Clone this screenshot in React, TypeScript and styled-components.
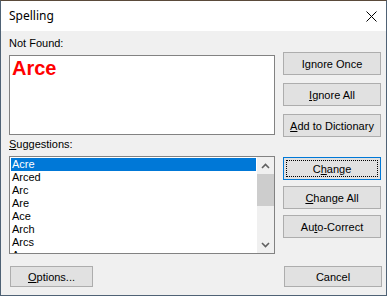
import React from "react";
import styled, { createGlobalStyle } from "styled-components";

const Global = createGlobalStyle`
  html, body { margin: 0; padding: 0; background: #4b5a6b; }
  body { font-family: "Liberation Sans", Arial, sans-serif; }
`;

const Window = styled.div`
  width: 387px;
  height: 296px;
  box-sizing: border-box;
  border: 1px solid #4f6275;
  border-top-color: #5a4a3a;
  background: #f0f0f0;
  display: flex;
  flex-direction: column;
  overflow: hidden;
`;

const TitleBar = styled.div`
  height: 30px;
  background: #ffffff;
  display: flex;
  align-items: center;
  justify-content: space-between;
  padding: 0 9px 0 8px;
  font-family: "Noto Sans", "Open Sans", sans-serif;
  font-size: 12px;
  color: #000;
`;

const Title = styled.span`
  margin-top: -1px;
`;

const CloseBox = styled.div`
  width: 12px;
  height: 12px;
  display: flex;
  align-items: center;
  justify-content: center;
`;

const Body = styled.div`
  flex: 1;
  padding: 0 4px 0 8px;
  display: flex;
  flex-direction: column;
  font-size: 11px;
  color: #000;
`;

const Grid = styled.div`
  display: grid;
  grid-template-columns: 266px 98px;
  column-gap: 8px;
`;

const LeftCol = styled.div`
  display: flex;
  flex-direction: column;
`;

const RightCol = styled.div<{ $top: number; $gap: number }>`
  display: flex;
  flex-direction: column;
  gap: ${(p) => p.$gap}px;
  padding-top: ${(p) => p.$top}px;
`;

const Label = styled.div<{ $top: number }>`
  line-height: 13px;
  margin-top: ${(p) => p.$top}px;
  margin-bottom: 5px;
`;

const TextBox = styled.div`
  height: 80px;
  box-sizing: border-box;
  border: 1px solid #828282;
  background: #fff;
  padding: 1px;
  margin-bottom: 3px;
`;

const Word = styled.div`
  color: #ff0000;
  font-weight: bold;
  font-size: 20px;
  line-height: 23px;
  font-family: "Liberation Sans", Arial, sans-serif;
  padding-left: 1px;
`;

const ListBox = styled.div`
  height: 98px;
  box-sizing: border-box;
  border: 1px solid #828282;
  background: #fff;
  display: flex;
  overflow: hidden;
`;

const Items = styled.div`
  flex: 1;
  padding: 1px 1px 0 1px;
  overflow: hidden;
`;

const Item = styled.div<{ $sel?: boolean }>`
  height: 13px;
  line-height: 13px;
  padding-left: 1px;
  background: ${(p) => (p.$sel ? "#0078d7" : "transparent")};
  color: ${(p) => (p.$sel ? "#fff" : "#000")};
  white-space: nowrap;
`;

const ScrollBar = styled.div`
  width: 17px;
  background: #f0f0f0;
  display: flex;
  flex-direction: column;
`;

const Arrow = styled.div`
  height: 17px;
  display: flex;
  align-items: center;
  justify-content: center;
`;

const Track = styled.div`
  flex: 1;
  display: flex;
  flex-direction: column;
`;

const Thumb = styled.div`
  height: 32px;
  background: #cdcdcd;
`;

const Button = styled.div<{ $default?: boolean; $h?: number }>`
  position: relative;
  height: ${(p) => p.$h ?? 23}px;
  box-sizing: border-box;
  background: #e1e1e1;
  border: 1px solid ${(p) => (p.$default ? "#0078d7" : "#adadad")};
  display: flex;
  align-items: center;
  justify-content: center;
  font-size: 11px;
  color: #000;
  white-space: nowrap;
`;

const Focus = styled.div`
  position: absolute;
  inset: 2px;
  border: 1px dotted #000;
`;

const U = styled.span`
  text-decoration: underline;
  text-underline-offset: 1px;
`;

const BottomRow = styled.div`
  display: flex;
  justify-content: space-between;
  margin-top: 12px;
  padding-left: 1px;
`;

const OptionsBtn = styled(Button)`
  width: 83px;
`;

const CancelBtn = styled(Button)`
  width: 98px;
`;

const Chevron = ({ up }: { up?: boolean }) => (
  <svg width="9" height="6" viewBox="0 0 9 6">
    <path
      d={up ? "M1 5 L4.5 1.5 L8 5" : "M1 1 L4.5 4.5 L8 1"}
      stroke="#606060"
      strokeWidth="1.6"
      fill="none"
    />
  </svg>
);

const suggestions = ["Acre", "Arced", "Arc", "Are", "Ace", "Arch", "Arcs", "Arcs"];

export default function App() {
  return (
    <>
      <Global />
      <Window>
        <TitleBar>
          <Title>Spelling</Title>
          <CloseBox>
            <svg width="11" height="11" viewBox="0 0 11 11">
              <path d="M0.5 0.5 L10.5 10.5 M10.5 0.5 L0.5 10.5" stroke="#000" strokeWidth="1" />
            </svg>
          </CloseBox>
        </TitleBar>
        <Body>
          <Grid>
            <LeftCol>
              <Label $top={6}>Not Found:</Label>
              <TextBox>
                <Word>Arce</Word>
              </TextBox>
            </LeftCol>
            <RightCol $top={21} $gap={8}>
              <Button>Ignore Once</Button>
              <Button>
                <U>I</U>gnore All
              </Button>
              <Button>
                <U>A</U>dd to Dictionary
              </Button>
            </RightCol>
            <LeftCol>
              <Label $top={0}>
                <U>S</U>uggestions:
              </Label>
              <ListBox>
                <Items>
                  {suggestions.map((s, i) => (
                    <Item key={i} $sel={i === 0}>
                      {s}
                    </Item>
                  ))}
                </Items>
                <ScrollBar>
                  <Arrow>
                    <Chevron up />
                  </Arrow>
                  <Track>
                    <Thumb />
                  </Track>
                  <Arrow>
                    <Chevron />
                  </Arrow>
                </ScrollBar>
              </ListBox>
            </LeftCol>
            <RightCol $top={19} $gap={6}>
              <Button $default>
                <Focus />C<U>h</U>ange
              </Button>
              <Button>
                <U>C</U>hange All
              </Button>
              <Button>
                Au<U>t</U>o-Correct
              </Button>
            </RightCol>
          </Grid>
          <BottomRow>
            <OptionsBtn $h={21}>
              <U>O</U>ptions...
            </OptionsBtn>
            <CancelBtn $h={21}>Cancel</CancelBtn>
          </BottomRow>
        </Body>
      </Window>
    </>
  );
}
